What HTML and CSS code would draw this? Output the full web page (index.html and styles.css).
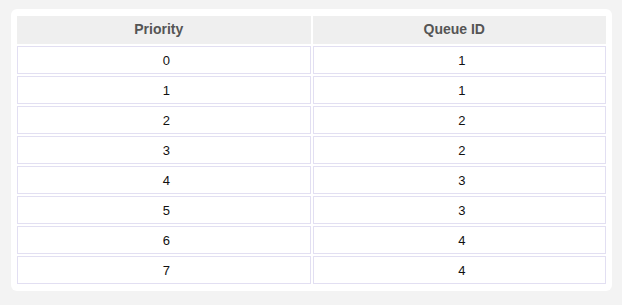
FILE: index.html
```html
<!DOCTYPE html>
<html>
<head>
<meta charset="utf-8">
<link rel="stylesheet" href="styles.css">
</head>
<body>
<div class="card">
  <table class="qtable">
    <thead>
      <tr><th>Priority</th><th>Queue ID</th></tr>
    </thead>
    <tbody>
      <tr><td>0</td><td>1</td></tr>
      <tr><td>1</td><td>1</td></tr>
      <tr><td>2</td><td>2</td></tr>
      <tr><td>3</td><td>2</td></tr>
      <tr><td>4</td><td>3</td></tr>
      <tr><td>5</td><td>3</td></tr>
      <tr><td>6</td><td>4</td></tr>
      <tr><td>7</td><td>4</td></tr>
    </tbody>
  </table>
</div>
</body>
</html>
```
FILE: styles.css
```css
html, body {
  margin: 0;
  background: #f3f3f3;
}
body {
  padding: 9px 10px 0 11px;
  font-family: "Liberation Sans", Arial, sans-serif;
}
.card {
  background: #ffffff;
  border-radius: 6px;
  padding: 5px 4px;
}
.qtable {
  width: 100%;
  border-collapse: separate;
  border-spacing: 2px;
  table-layout: fixed;
}
.qtable th {
  height: 26px;
  padding: 0 10px 2px 0;
  background: #efefef;
  color: #555555;
  font-size: 14px;
  font-weight: bold;
  text-align: center;
  vertical-align: middle;
}
.qtable td {
  height: 26px;
  padding: 0 0 0 5px;
  border: 1px solid #e2dff2;
  color: #111111;
  font-size: 13px;
  text-align: center;
  vertical-align: middle;
}
```
